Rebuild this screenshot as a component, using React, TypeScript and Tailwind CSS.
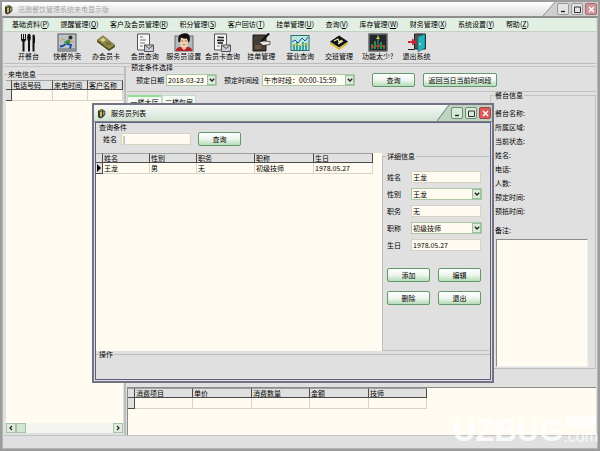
import type { ReactNode } from "react";

const menus = [
  ["基础资料", "P"],
  ["提醒管理", "Q"],
  ["客户及会员管理", "R"],
  ["积分管理", "S"],
  ["客户回访", "T"],
  ["挂单管理", "U"],
  ["查询", "V"],
  ["库存管理", "W"],
  ["财务管理", "X"],
  ["系统设置", "Y"],
  ["帮助", "Z"],
];

function Mug() {
  return (
    <svg width="9" height="11" viewBox="0 0 9 11" className="shrink-0">
      <path d="M1 2.500 5 1l1.500 1v7L3 10.500 1 9z" fill="#3a3a1e" />
      <path d="M3 4v5l2-1V3.500z" fill="#c9bb72" />
      <path d="M6 3h1.800v4L6 8" fill="none" stroke="#3a3a1e" strokeWidth="1" />
      <path d="M1 2.500 5 1l1.500 1L3 3.500z" fill="#8d8648" />
    </svg>
  );
}

function CutleryIcon() {
  return (
    <svg width="20" height="19" viewBox="0 0 20 19" fill="#111">
      <path d="M3 1h1v5h1V1h1v5h1V1h1v6L6.500 9v9.500h-2V9L3 7z" />
      <ellipse cx="11" cy="4.500" rx="1.800" ry="3.800" />
      <path d="M10 7h2v11.500h-2z" />
      <path d="M14.500 2Q17 0 17 5v5h-.5v8.500h-2z" />
    </svg>
  );
}

function RunnerIcon() {
  return (
    <svg width="20" height="19" viewBox="0 0 20 19">
      <rect x="1" y="1" width="18" height="17" fill="#b9c3cc" stroke="#555" />
      <path d="M2 15h16v2.500H2z" fill="#8d949a" />
      <circle cx="13.500" cy="4.500" r="2" fill="#3a2a1a" />
      <path d="m12 6-5 3 3 3 4-3z" fill="#3c8f3c" />
      <path d="M8 6.500H5L3.500 8M13 8l4 1" stroke="#d8a060" strokeWidth="1.300" fill="none" />
      <path d="m10 11 4 1-1 3.500M8.500 11 6 13l-3 .5" stroke="#1b3f9c" strokeWidth="1.800" fill="none" />
    </svg>
  );
}

function CardIcon() {
  return (
    <svg width="20" height="19" viewBox="0 0 20 19">
      <path d="m1 7 6-4.500L19 12v2l-6 4L1 9z" fill="#4e4a20" />
      <path d="m1 7 6-4.500L19 12l-6 4z" fill="#8f8a48" />
      <path d="m4 7 3-2.300 3 2.300-3 2z" fill="#d8d29a" />
      <path d="m11 12 4-1.500M9.500 10.500l4-1.500" stroke="#5f5a2c" />
    </svg>
  );
}

function DocumentIcon({ bold = false }: { bold?: boolean }) {
  return (
    <svg width="20" height="19" viewBox="0 0 20 19">
      <path d="M2.500 1h12v16h-12z" fill="#f6f6f6" stroke="#555" />
      <path d="M5 4h3M5 7h6M5 10h5M5 13h3" stroke="#777" />
      {bold && <path d="M6 4.500h6M5 7.500h7M6 10h5" stroke="#222" strokeWidth="1.500" />}
      <path d="M9.500 12h9v6.500h-9z" fill="#c9ccd6" stroke="#555" />
      <path d="m9.500 12 4.500 3.500 4.500-3.500" fill="none" stroke="#555" />
    </svg>
  );
}

function PersonIcon() {
  return (
    <svg width="20" height="19" viewBox="0 0 20 19">
      <rect x="1" y="3" width="18" height="15" fill="#b4bcc0" stroke="#666" />
      <path d="M2 18q0-4 4-4h8q4 0 4 4z" fill="#b3202a" />
      <path d="M7.500 11h5v4L10 17l-2.500-2z" fill="#f0c4a0" />
      <path d="M6 5h8v5q-1 4-4 4t-4-4z" fill="#f7d2b0" />
      <path d="M4.500 9Q3 1.500 9 .5q7-1 7 5 0 2-1.500 4.500L13 5.500Q9 6 7 4.500L6 9.500z" fill="#15100e" />
      <path d="M7.500 8h1.500M11 8h1.500" stroke="#222" strokeWidth=".8" />
      <path d="M9 11.500h2" stroke="#a33" strokeWidth=".8" />
    </svg>
  );
}

function HangIcon() {
  return (
    <svg width="20" height="19" viewBox="0 0 20 19">
      <path d="M2 2h13v16H2z" fill="#453c34" stroke="#1d1915" />
      <path d="M4 12h6v4H4z" fill="#6d5442" />
      <path d="m19 1-8 8-3 1 2-3 7-7z" fill="#111" />
      <path d="m8 9 5-1 6 .5v3l-7 1z" fill="#ece6dc" stroke="#222" strokeWidth=".7" />
    </svg>
  );
}

function ChartIcon() {
  return (
    <svg width="20" height="19" viewBox="0 0 20 19">
      <rect x="1" y="2.500" width="18" height="15" fill="#bfe5dc" stroke="#267071" />
      <path d="M4 17v-6M7 17v-8M10 17v-5M13 17V9M16 17v-7" stroke="#2b9a9c" strokeWidth="1.800" />
      <path d="m2 9 3-2 3 3 4-5 3 3 3-4" fill="none" stroke="#1955aa" />
      <path d="m2 13 4-2 3 2 4-2 5 1" fill="none" stroke="#d8c62c" />
    </svg>
  );
}

function ShiftIcon() {
  return (
    <svg width="20" height="19" viewBox="0 0 20 19">
      <path d="m1 9 9 6 9-6v2l-9 6-9-6z" fill="#d5b824" />
      <path d="m1 8.500 9-6 9 6-9 6z" fill="#111" />
      <path d="m5 8 4-2 1 3 3-2M9 11l5-3" stroke="#efe7b1" strokeWidth="1.200" fill="none" />
    </svg>
  );
}

function FeaturesIcon() {
  return (
    <svg width="20" height="19" viewBox="0 0 20 19">
      <rect x="1" y="1" width="18" height="17" fill="#20282b" stroke="#6a6a6a" strokeWidth="1.500" />
      <path d="M10 2v14" stroke="#3da8b0" />
      <path d="M4 16v-5M7 16V8M13 16V9M16 16v-4" stroke="#3fa94b" strokeWidth="1.500" />
      <path d="M3 14h3M8 13h4M14 13h3" stroke="#d03a2c" strokeWidth="1.500" />
      <path d="m8 6 2-3 2 3z" fill="#d9c43b" />
    </svg>
  );
}

function ExitIcon() {
  return (
    <svg width="20" height="19" viewBox="0 0 20 19">
      <path d="M7.500 1h11v15h-11z" fill="#555" stroke="#222" />
      <path d="m11 4 7-3v14l-7 3.800z" fill="#24b4bd" stroke="#156a70" strokeWidth=".6" />
      <path d="M13 10v2" stroke="#fff" />
      <path d="M1 8h4V5.500L10 9l-5 3.500V10H1z" fill="#cf2735" />
      <path d="M1 16.500h6.500" stroke="#222" />
    </svg>
  );
}

const tools: { label: string; icon: ReactNode }[] = [
  { label: "开餐台", icon: <CutleryIcon /> },
  { label: "快餐外卖", icon: <RunnerIcon /> },
  { label: "办会员卡", icon: <CardIcon /> },
  { label: "会员查询", icon: <DocumentIcon /> },
  { label: "服务员设置", icon: <PersonIcon /> },
  { label: "会员卡查询", icon: <DocumentIcon bold /> },
  { label: "挂单管理", icon: <HangIcon /> },
  { label: "营业查询", icon: <ChartIcon /> },
  { label: "交班管理", icon: <ShiftIcon /> },
  { label: "功能太少?", icon: <FeaturesIcon /> },
  { label: "退出系统", icon: <ExitIcon /> },
];

function WindowButtons({ active = false }: { active?: boolean }) {
  const face = active ? "bg-[#d9eadb] border-[#6f8f74]" : "bg-[#e3e3e3] border-[#999999]";
  const close = active ? "bg-[#dc5a5a] border-[#a04848] text-white" : "bg-[#cf9497] border-[#a07072] text-white";
  const base = "flex h-[12px] w-[12px] items-center justify-center rounded-[2px] border";
  return (
    <div className="flex self-stretch">
      <svg width="14" viewBox="0 0 14 16" preserveAspectRatio="none" className="h-full">
        <path d="M0 16 12 0h2v16z" fill={active ? "#bfd3c1" : "#cfcfcf"} />
        <path d="M0 16 12 0" stroke={active ? "#66806a" : "#8b8b8b"} fill="none" />
      </svg>
      <div className={`flex items-center gap-[2px] pr-px ${active ? "bg-[#bfd3c1]" : "bg-[#cfcfcf]"}`}>
        <button aria-label="最小化" className={`${base} ${face}`}>
          <svg width="7" height="7" viewBox="0 0 7 7"><path d="M1 5.500h4" stroke="#222" strokeWidth="1.400" /></svg>
        </button>
        <button aria-label="最大化" className={`${base} ${face}`}>
          <svg width="7" height="7" viewBox="0 0 7 7"><path d="M.5 1h6M.5 1v5.500h6V1" fill="none" stroke="#333" /></svg>
        </button>
        <button aria-label="关闭" className={`${base} ${close}`}>
          <svg width="7" height="7" viewBox="0 0 7 7"><path d="m1 1 5 5M6 1 1 6" stroke="currentColor" strokeWidth="1.400" /></svg>
        </button>
      </div>
    </div>
  );
}

function PushButton({ children, wide = false }: { children: ReactNode; wide?: boolean }) {
  return (
    <button
      className={`${wide ? "w-[74px]" : "w-[43px]"} h-[14px] shrink-0 rounded-[2px] border border-[#62996a] bg-linear-to-b from-white via-[#eef6ee] to-[#b5dcb8] leading-[10px]`}
    >
      {children}
    </button>
  );
}

function Dropdown({ id, value, width }: { id: string; value: string; width: string }) {
  return (
    <div className={`relative shrink-0 ${width}`}>
      <select
        id={id}
        className="block h-[12px] w-full appearance-none border border-[#a9c9a6] bg-[#fffbf0] pl-px leading-[10px] outline-none"
      >
        <option>{value}</option>
      </select>
      <span className="pointer-events-none absolute inset-y-px right-px flex w-[9px] items-center justify-center border border-[#9bbf9f] bg-[#dcecdc]">
        <svg width="6" height="4" viewBox="0 0 6 4"><path d="m.8.8 2.200 2.200L5.200.8" fill="none" stroke="#222" strokeWidth="1.300" /></svg>
      </span>
    </div>
  );
}

const box = "block h-[12px] w-[70px] border border-[#d5d2c4] bg-[#fffbf0] pl-px leading-[10px] outline-none";

function Grid({ cols, row, marker = false }: { cols: [string, string][]; row?: string[]; marker?: boolean }) {
  return (
    <table className="table-fixed border-separate border-spacing-0 text-left">
      <thead>
        <tr className="h-[10px] bg-[#e0e0e0]">
          <th className="w-[7px] border-r border-b border-t border-[#4b4b4b] border-t-[#a0a0a0] p-0" />
          {cols.map(([name, width]) => (
            <th
              key={name}
              className={`${width} overflow-hidden border-r border-b border-t border-[#4b4b4b] border-t-[#a0a0a0] p-0 pl-px leading-[8px] font-normal whitespace-nowrap`}
            >
              {name}
            </th>
          ))}
        </tr>
      </thead>
      <tbody>
        <tr className="h-[11px]">
          <td className="border-r border-b border-[#4b4b4b] bg-[#e0e0e0] p-0">
            {marker && (
              <svg width="6" height="8" viewBox="0 0 6 8" className="block"><path d="M1 0v8l4-4z" fill="#000" /></svg>
            )}
          </td>
          {cols.map(([name], i) => (
            <td key={name} className="border-r border-b border-[#d6d3ca] p-0 pl-px leading-[9px] whitespace-nowrap">
              {row?.[i]}
            </td>
          ))}
        </tr>
      </tbody>
    </table>
  );
}

const staffFields = [
  { id: "name", label: "姓名", value: "王龙", list: false },
  { id: "sex", label: "性别", value: "王龙", list: true },
  { id: "duty", label: "职务", value: "无", list: false },
  { id: "rank", label: "职称", value: "初级技师", list: true },
  { id: "birth", label: "生日", value: "1978.05.27", list: false },
];

function StaffDialog() {
  return (
    <section
      role="dialog"
      aria-label="服务员列表"
      className="absolute top-[101px] left-[90px] flex h-[280px] w-[402px] flex-col border-2 border-[#737384] bg-[#e0e0e0]"
    >
      <header className="flex h-[17px] shrink-0 items-center border-b border-[#7d8a80] bg-linear-to-b from-[#f7faf7] to-[#d3e2d4] pl-[3px]">
        <Mug />
        <h2 className="ml-[5px] flex-1">服务员列表</h2>
        <WindowButtons active />
      </header>
      <div className="mx-px mb-px flex flex-1 flex-col border border-[#5c5c86]">
        <fieldset className="h-[30px] shrink-0">
          <legend className="ml-[3px] h-[9px]">查询条件</legend>
          <div className="flex items-center pl-[7px]">
            <label htmlFor="keyword" className="w-[18px]">姓名</label>
            <input id="keyword" defaultValue="|" className={box} />
            <div className="ml-[7px]"><PushButton>查询</PushButton></div>
          </div>
        </fieldset>
        <div className="flex h-[198px] shrink-0">
          <div className="flex-1 bg-[#fffbf0]">
            <Grid
              marker
              cols={[
                ["姓名", "w-[47px]"],
                ["性别", "w-[47px]"],
                ["职务", "w-[58px]"],
                ["职称", "w-[59px]"],
                ["生日", "w-[59px]"],
              ]}
              row={["王龙", "男", "无", "初级技师", "1978.05.27"]}
            />
          </div>
          <fieldset className="w-[108px] border border-[#bdbdbd] border-r-transparent">
            <legend className="ml-[3px] h-[7px] px-px leading-[7px]">详细信息</legend>
            <div className="mt-[11px] flex flex-col gap-[5px] pl-[4px]">
              {staffFields.map((f) => (
                <div key={f.id} className="flex items-center">
                  <label htmlFor={f.id} className="w-[24px]">{f.label}</label>
                  {f.list ? (
                    <Dropdown id={f.id} value={f.value} width="w-[71px]" />
                  ) : (
                    <input id={f.id} defaultValue={f.value} className={box} />
                  )}
                </div>
              ))}
            </div>
            <div className="mt-[17px] ml-[4px] grid w-[94px] grid-cols-2 gap-x-[8px] gap-y-[9px]">
              <PushButton>添加</PushButton>
              <PushButton>编辑</PushButton>
              <PushButton>删除</PushButton>
              <PushButton>退出</PushButton>
            </div>
          </fieldset>
        </div>
        <fieldset className="flex-1 border-t border-[#bdbdbd]">
          <legend className="ml-[3px] h-[7px] pr-px leading-[7px]">操作</legend>
        </fieldset>
      </div>
    </section>
  );
}

export default function App() {
  return (
    <div className="relative flex h-screen w-full flex-col overflow-hidden border-2 border-[#9c9c9c] bg-[#e0e0e0] font-['Noto_Sans_CJK_SC',sans-serif] text-[7px] leading-[9px] text-black">
      <header className="flex h-[14px] shrink-0 items-center bg-linear-to-b from-white to-[#dddddd] pl-[2px]">
        <Mug />
        <h1 className="ml-[5px] flex-1 text-[#a4a4a4]">迅驰餐饮管理系统来电显示版</h1>
        <WindowButtons />
      </header>
      <div className="flex min-h-0 flex-1 flex-col border border-t-2 border-[#b4b4b4] border-t-[#8c8c8c] px-px">
        <nav className="h-[14px] shrink-0 border-b border-[#c5cec5] bg-[#e2efe3] pt-[2px] pl-[8px] whitespace-nowrap">
          <div className="flex w-[517px] justify-between">
            {menus.map(([name, key]) => (
              <button key={name}>
                {name}(<u>{key}</u>)
              </button>
            ))}
          </div>
        </nav>
        <div className="flex h-[32px] shrink-0 border-b border-[#bcbcbc] pt-px pl-[5px]">
          <div className="grid w-[427px] grid-cols-11">
            {tools.map((t) => (
              <button key={t.label} className="flex flex-col items-center whitespace-nowrap">
                {t.icon}
                <span>{t.label}</span>
              </button>
            ))}
          </div>
        </div>
        <main className="mt-[2px] flex min-h-0 flex-1 border-t border-b border-[#c4c4c4]">
          <div className="w-[122px] shrink-0 border-r-2 border-[#bcbcbc] pt-[3px]">
            <fieldset className="flex flex-col border-t border-[#bdbdbd] pt-px">
              <legend className="ml-[3px] px-px">来电信息</legend>
              <div className="mr-px ml-[2px] flex h-[353px] flex-col overflow-hidden bg-[#fffbf0]">
                <div className="flex-1">
                  <Grid cols={[["电话号码", "w-[43px]"], ["来电时间", "w-[36px]"], ["客户名称", "w-[36px]"]]} />
                </div>
                <div className="flex h-[10px] items-stretch bg-[#f4f4f2]">
                  <button aria-label="向左" className="flex w-[10px] items-center justify-center border border-[#a6c3a8] bg-[#deecde]">
                    <svg width="4" height="6" viewBox="0 0 4 6"><path d="M3 1 1 3l2 2" fill="none" stroke="#222" strokeWidth="1.200" /></svg>
                  </button>
                  <div className="w-[10px] border border-[#a6c3a8] bg-[#cfe6d0]" />
                  <div className="flex-1" />
                  <button aria-label="向右" className="flex w-[10px] items-center justify-center border border-[#a6c3a8] bg-[#deecde]">
                    <svg width="4" height="6" viewBox="0 0 4 6"><path d="m1 1 2 2-2 2" fill="none" stroke="#222" strokeWidth="1.200" /></svg>
                  </button>
                </div>
              </div>
            </fieldset>
          </div>
          <div className="flex min-w-0 flex-1 flex-col pl-px">
            <fieldset className="-mt-[3px] h-[28px] shrink-0 border-b border-[#c0c0c0]">
              <legend className="ml-[3px] h-[7px] bg-[#e0e0e0] px-px leading-[7px]">预定条件选择</legend>
              <div className="flex items-center pt-[2px] pl-[9px] whitespace-nowrap">
                <label htmlFor="date" className="w-[30px]">预定日期</label>
                <Dropdown id="date" value="2018-03-23" width="w-[51px]" />
                <label htmlFor="period" className="ml-[7px] w-[38px]">预定时间段</label>
                <Dropdown id="period" value="午市时段：00:00-15:59" width="w-[93px]" />
                <div className="ml-[17px] flex gap-[8px]">
                  <PushButton>查询</PushButton>
                  <PushButton wide>返回当日当前时间段</PushButton>
                </div>
              </div>
            </fieldset>
            <div className="flex h-[277px] shrink-0 border-b border-[#bdbdbd]">
              <div className="flex flex-1 items-start pt-[3px]">
                <button className="h-[14px] w-[35px] border border-t-2 border-[#c9dccb] border-t-[#93dc93] bg-[#f4f9f4]">一楼大厅</button>
                <button className="h-[14px] w-[34px] border border-[#c9dccb] bg-[#f4f9f4]">二楼包房</button>
              </div>
              <fieldset className="w-[106px] border border-b-0 border-[#c2c2c2]">
                <legend className="ml-[3px] h-[7px] px-px leading-[7px]">餐台信息</legend>
                <dl className="mt-[10px] flex flex-col gap-[5px] pl-[4px]">
                  {["餐台名称:", "所属区域:", "当前状态:", "姓名:", "电话:", "人数:", "预定时间:", "预抵时间:"].map((t) => (
                    <dt key={t}>{t}</dt>
                  ))}
                </dl>
                <label htmlFor="remark" className="mt-[10px] block pl-[4px]">备注:</label>
                <textarea
                  id="remark"
                  className="mt-[4px] ml-[5px] block h-[128px] w-[92px] resize-none border border-[#eeeeee] border-t-[#8a8a8a] border-l-[#8a8a8a] bg-[#fffbf0] outline-none"
                />
              </fieldset>
            </div>
            <div className="mt-[18px] flex-1 border-t border-l border-[#8a8a8a] bg-[#fffbf0]">
              <Grid
                cols={[
                  ["消费项目", "w-[58px]"],
                  ["单价", "w-[59px]"],
                  ["消费数量", "w-[58px]"],
                  ["金额", "w-[59px]"],
                  ["技师", "w-[58px]"],
                ]}
              />
            </div>
          </div>
        </main>
        <footer className="h-[12px] shrink-0" />
      </div>
      <StaffDialog />
      <div className="pointer-events-none absolute right-0 bottom-[2px] flex items-end font-['Liberation_Sans',sans-serif] text-white/80">
        <span className="text-[31px] leading-[32px] font-bold">UZBUG</span>
        <span className="flex flex-col items-center">
          <span className="h-[11px] w-[30px] rounded-sm bg-white/80" />
          <span className="text-[16px] leading-[20px]">.com</span>
        </span>
      </div>
    </div>
  );
}
